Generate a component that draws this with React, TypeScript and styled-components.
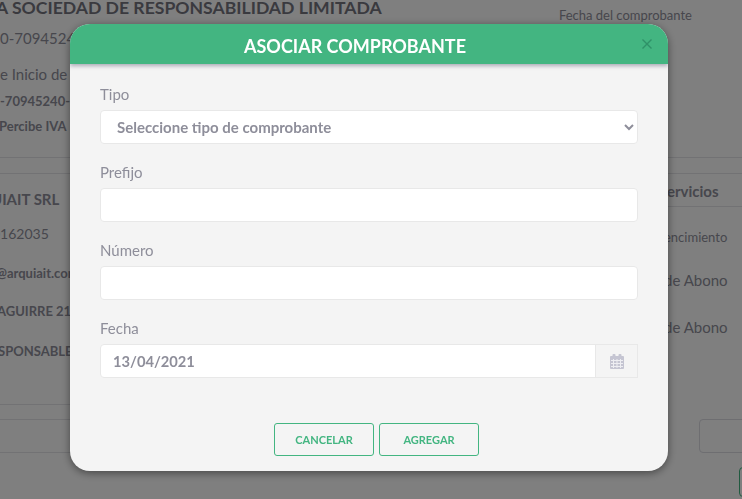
import React from "react";
import styled, { createGlobalStyle } from "styled-components";

const Global = createGlobalStyle`
  html, body { margin: 0; padding: 0; background: #fff; }
  body { font-family: Lato, "Liberation Sans", sans-serif; color: #8e8e9a; overflow: hidden; }
  * { box-sizing: border-box; }
`;

const Page = styled.div`
  width: 742px;
  height: 499px;
  overflow: hidden;
  display: flex;
  flex-direction: column;
  & > * { flex: none; }
`;
const TopRow = styled.div`
  display: flex;
  justify-content: space-between;
  height: 157px;
  padding-right: 50px;
`;
const Column = styled.div<{ $left: number }>`
  margin-left: ${(p) => p.$left}px;
`;
const Title = styled.div`
  font-size: 17.6px;
  font-weight: 700;
  line-height: 18px;
  margin-top: -1px;
  white-space: nowrap;
  color: #74747e;
`;
const Line = styled.div<{ $top: number; $size: number; $weight?: number; $left?: number }>`
  margin-top: ${(p) => p.$top}px;
  margin-left: ${(p) => p.$left ?? 0}px;
  font-size: ${(p) => p.$size}px;
  font-weight: ${(p) => p.$weight ?? 400};
  line-height: 18px;
  white-space: nowrap;
`;
const FechaHead = styled.div`
  font-size: 13px;
  line-height: 16px;
  margin-top: 7px;
  white-space: nowrap;
`;
const Rule = styled.div<{ $top: number; $width?: number }>`
  margin-top: ${(p) => p.$top}px;
  border-top: 1px solid #e4e4e8;
  height: 1px;
  width: ${(p) => (p.$width ? `${p.$width}px` : "auto")};
`;
const MiddleRow = styled.div`
  display: flex;
  justify-content: space-between;
  height: 230px;
`;
const RightInfo = styled.div`
  width: 75px;
  margin-left: auto;
`;
const Foot = styled.div`
  display: flex;
  justify-content: space-between;
  align-items: flex-end;
  height: 33px;
`;
const GhostBox = styled.div`
  width: 60px;
  height: 34px;
  margin-right: -17px;
  border: 1px solid #dcdce2;
  border-radius: 4px;
`;
const GhostButton = styled.div`
  width: 20px;
  height: 30px;
  margin: 14px -17px 0 auto;
  border: 1px solid #43b581;
  border-radius: 4px;
`;

const Backdrop = styled.div`
  position: fixed;
  inset: 0;
  background: rgba(0, 0, 0, 0.5);
`;
const Modal = styled.div`
  position: fixed;
  left: 70px;
  top: 24px;
  width: 598px;
  height: 447px;
  background: #f4f4f4;
  border-radius: 20px;
  box-shadow: 0 2px 8px rgba(0, 0, 0, 0.45);
  display: flex;
  flex-direction: column;
  overflow: hidden;
`;
const Header = styled.div`
  position: relative;
  height: 40px;
  flex: none;
  background: #43b581;
  box-shadow: 0 2px 4px rgba(60, 60, 90, 0.4);
  display: flex;
  align-items: center;
  justify-content: center;
  padding-right: 28px;
`;
const HeaderTitle = styled.h5`
  margin: 3px 0 0;
  font-size: 18px;
  font-weight: 700;
  color: #fff;
  line-height: 24px;
`;
const Close = styled.span`
  position: absolute;
  right: 15px;
  top: 14px;
  width: 12px;
  height: 12px;
  display: flex;
  color: #2f9168;
`;
const Body = styled.div`
  padding: 22px 30px 0;
  flex: 1;
  display: flex;
  flex-direction: column;
  gap: 20px;
`;
const Field = styled.div`
  display: flex;
  flex-direction: column;
`;
const Label = styled.label`
  font-size: 15px;
  line-height: 17px;
  height: 24px;
  color: #8e8e9a;
`;
const Select = styled.select`
  height: 34px;
  width: 100%;
  padding: 0 8px 0 12px;
  font-family: Lato, sans-serif;
  font-size: 15px;
  font-weight: 700;
  color: #8e8e9a;
  background: #fff;
  border: 1px solid #e8e8e8;
  border-radius: 4px;
  outline: none;
`;
const Input = styled.input`
  height: 34px;
  width: 100%;
  padding: 0 12px;
  font-family: Lato, sans-serif;
  font-size: 14.7px;
  font-weight: 700;
  color: #8e8e9a;
  background: #fff;
  border: 1px solid #e8e8e8;
  border-radius: 4px;
  outline: none;
`;
const InputGroup = styled.div`
  display: flex;
  height: 34px;
`;
const DateInput = styled(Input)`
  flex: 1;
  border-radius: 4px 0 0 4px;
`;
const Addon = styled.span`
  width: 43px;
  margin-left: -1px;
  flex: none;
  display: flex;
  align-items: center;
  justify-content: center;
  background: #f4f4f4;
  border: 1px solid #e8e8e8;
`;
const Footer = styled.div`
  display: flex;
  justify-content: center;
  gap: 5px;
  padding: 0 0 15px 15px;
`;
const Button = styled.button`
  width: 100px;
  height: 33px;
  background: transparent;
  border: 1px solid #43b581;
  border-radius: 3px;
  color: #43b581;
  font-family: Lato, sans-serif;
  font-size: 11px;
  font-weight: 700;
  padding: 0;
`;

const CalendarIcon = () => (
  <svg width="14" height="15" viewBox="0 0 14 15">
    <rect x="0" y="2" width="14" height="13" rx="1" fill="#c5c5d2" />
    <rect x="2.5" y="0" width="3" height="4" rx="1" fill="#c5c5d2" />
    <rect x="8.5" y="0" width="3" height="4" rx="1" fill="#c5c5d2" />
    <path
      d="M1 6.5h12M1 9.5h12M1 12.5h12M3.5 5v9M7 5v9M10.5 5v9"
      stroke="#eeeef2"
      strokeWidth="1"
    />
  </svg>
);

const CloseIcon = () => (
  <svg width="12" height="12" viewBox="0 0 12 12">
    <path d="M1.5 1.5l9 9M10.5 1.5l-9 9" stroke="currentColor" strokeWidth="1.4" />
  </svg>
);

export default function App() {
  return (
    <>
      <Global />
      <Page>
        <TopRow>
          <Column $left={-4}>
            <Title>A SOCIEDAD DE RESPONSABILIDAD LIMITADA</Title>
            <Line $top={12} $size={15} $left={4}>0-70945240</Line>
            <Line $top={18} $size={15} $left={4}>e Inicio de Actividades</Line>
            <Line $top={9} $size={13} $weight={700} $left={4}>-70945240-8</Line>
            <Line $top={7} $size={13} $weight={700} $left={3}>Percibe IVA</Line>
          </Column>
          <FechaHead>Fecha del comprobante</FechaHead>
        </TopRow>
        <Rule $top={0} />
        <Rule $top={15} />
        <MiddleRow>
          <Column $left={-2}>
            <Line $top={16} $size={15} $weight={700} $left={-7}>UIAIT SRL</Line>
            <Line $top={17} $size={14} $left={-6}>0162035</Line>
            <Line $top={21} $size={13} $weight={700} $left={-2}>@arquiait.com</Line>
            <Line $top={20} $size={13} $weight={700} $left={-1}>AGUIRRE 2100</Line>
            <Line $top={22} $size={13} $weight={700}>SPONSABLE</Line>
          </Column>
          <RightInfo>
            <Line $top={8} $size={15} $weight={700}>ervicios</Line>
            <Rule $top={6} />
            <Line $top={21} $size={13} $left={-3}>encimiento</Line>
            <Line $top={25} $size={15} $left={-3}>de Abono</Line>
            <Line $top={29} $size={15} $left={-3}>de Abono</Line>
          </RightInfo>
        </MiddleRow>
        <Rule $top={0} $width={300} />
        <Rule $top={14} $width={300} />
        <Foot>
          <Rule $top={0} $width={300} />
          <GhostBox />
        </Foot>
        <GhostButton />
      </Page>
      <Backdrop />
      <Modal>
        <Header>
          <HeaderTitle>ASOCIAR COMPROBANTE</HeaderTitle>
          <Close><CloseIcon /></Close>
        </Header>
        <Body>
          <Field>
            <Label>Tipo</Label>
            <Select defaultValue="">
              <option value="">Seleccione tipo de comprobante</option>
            </Select>
          </Field>
          <Field>
            <Label>Prefijo</Label>
            <Input />
          </Field>
          <Field>
            <Label>Número</Label>
            <Input />
          </Field>
          <Field>
            <Label>Fecha</Label>
            <InputGroup>
              <DateInput defaultValue="13/04/2021" />
              <Addon><CalendarIcon /></Addon>
            </InputGroup>
          </Field>
        </Body>
        <Footer>
          <Button>CANCELAR</Button>
          <Button>AGREGAR</Button>
        </Footer>
      </Modal>
    </>
  );
}
